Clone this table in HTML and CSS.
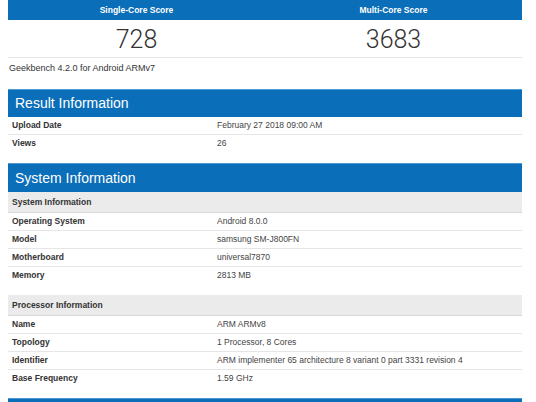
FILE: index.html
```html
<!DOCTYPE html>
<html>
<head>
<meta charset="utf-8">
<link rel="stylesheet" href="styles.css">
</head>
<body>
<div class="page">
  <div class="scores">
    <div class="score">
      <div class="score-head">Single-Core Score</div>
      <div class="score-val">728</div>
    </div>
    <div class="score">
      <div class="score-head">Multi-Core Score</div>
      <div class="score-val">3683</div>
    </div>
  </div>
  <div class="version">Geekbench 4.2.0 for Android ARMv7</div>

  <div class="section">
    <div class="bar">Result Information</div>
    <div class="row"><div class="k">Upload Date</div><div class="v">February 27 2018 09:00 AM</div></div>
    <div class="row last"><div class="k">Views</div><div class="v">26</div></div>
  </div>

  <div class="section">
    <div class="bar bar-tall">System Information</div>
    <div class="sub">System Information</div>
    <div class="row"><div class="k">Operating System</div><div class="v">Android 8.0.0</div></div>
    <div class="row"><div class="k">Model</div><div class="v">samsung SM-J800FN</div></div>
    <div class="row"><div class="k">Motherboard</div><div class="v">universal7870</div></div>
    <div class="row last"><div class="k">Memory</div><div class="v">2813 MB</div></div>
    <div class="sub sub-gap">Processor Information</div>
    <div class="row"><div class="k">Name</div><div class="v">ARM ARMv8</div></div>
    <div class="row"><div class="k">Topology</div><div class="v">1 Processor, 8 Cores</div></div>
    <div class="row"><div class="k">Identifier</div><div class="v">ARM implementer 65 architecture 8 variant 0 part 3331 revision 4</div></div>
    <div class="row last"><div class="k">Base Frequency</div><div class="v">1.59 GHz</div></div>
  </div>

  <div class="next-bar"></div>
</div>
</body>
</html>
```

FILE: styles.css
```css
html, body {
  margin: 0;
  padding: 0;
  background: #ffffff;
}
body {
  font-family: "Liberation Sans", Arial, sans-serif;
  color: #333333;
  overflow: hidden;
}
.page {
  width: 514px;
  margin-left: 8px;
}
.scores {
  display: grid;
  grid-template-columns: 1fr 1fr;
  border-bottom: 1px solid #e4e4e4;
}
.score-head {
  background: #0b6eb8;
  color: #ffffff;
  font-weight: bold;
  font-size: 8.5px;
  height: 20px;
  line-height: 20px;
  text-align: center;
}
.score-val {
  height: 37px;
  line-height: 40px;
  text-align: center;
  font-family: Roboto, "Liberation Sans", sans-serif;
  font-weight: 300;
  font-size: 25px;
  color: #333;
}
.version {
  font-size: 9px;
  height: 21px;
  line-height: 21px;
  padding-left: 1px;
  color: #333;
}
.section {
  margin-top: 10px;
}
.bar {
  background: #0b6eb8;
  border-top: 1px solid #4b98d2;
  color: #ffffff;
  font-size: 14px;
  height: 27px;
  line-height: 27px;
  padding-left: 7px;
}
.bar-tall {
  height: 28px;
  line-height: 28px;
}
.row {
  display: flex;
  height: 17px;
  line-height: 17px;
  border-bottom: 1px solid #e6e6e6;
  font-size: 8.5px;
}
.row.last {
  border-bottom: none;
  height: 18px;
}
.k {
  width: 205px;
  flex: none;
  padding-left: 4px;
  font-weight: bold;
  color: #333;
}
.v {
  color: #444;
}
.sub {
  background: #ebebeb;
  border-bottom: 1px solid #d8d8d8;
  height: 20px;
  line-height: 20px;
  font-size: 8.5px;
  font-weight: bold;
  padding-left: 4px;
  color: #333;
}
.sub-gap {
  margin-top: 10px;
}
.next-bar {
  margin-top: 10px;
  height: 6px;
  background: #0b6eb8;
  border-top: 1px solid #4b98d2;
}
```
